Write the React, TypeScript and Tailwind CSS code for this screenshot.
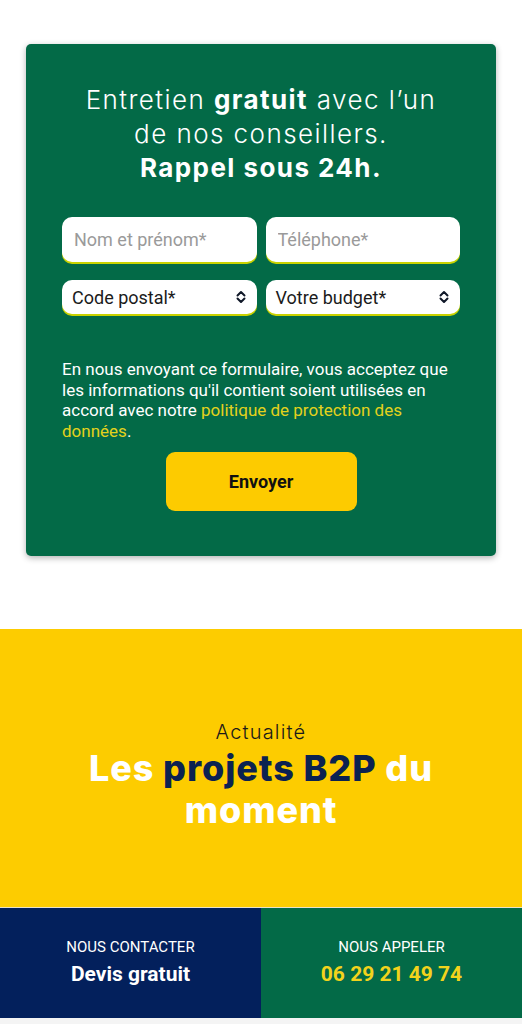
import React from 'react';

const Chevrons: React.FC = () => (
  <svg className="h-4 w-4 text-gray-900" viewBox="0 0 16 16" fill="none" stroke="currentColor" strokeWidth={2} strokeLinecap="round" strokeLinejoin="round">
    <path d="M4.5 6.5L8 3l3.5 3.5M4.5 9.5L8 13l3.5-3.5" />
  </svg>
);

const heading = { fontFamily: 'Inter, "Open Sans", sans-serif' };
const body = { fontFamily: 'Roboto, "Liberation Sans", sans-serif' };

export default function App() {
  return (
    <div className="flex min-h-screen flex-col bg-white" style={body}>
      <main className="px-[26px] pt-[44px] pb-[73px]">
        <section className="rounded-[5px] bg-[#036a47] px-9 pt-[39px] pb-[45px] shadow-[0_2px_6px_rgba(0,0,0,0.3)]">
          <h2 className="text-center text-[26px] font-light leading-[34px] tracking-[0.055em] text-white" style={heading}>
            Entretien <span className="font-bold">gratuit</span> avec l’un
            <br />
            de nos conseillers.
            <br />
            <span className="font-bold">Rappel sous 24h.</span>
          </h2>

          <form className="mt-[32px]" onSubmit={(e) => e.preventDefault()}>
            <div className="grid grid-cols-2 gap-[9px]">
              <input
                placeholder="Nom et prénom*"
                className="h-[45px] rounded-[10px] bg-white px-3 text-[18px] text-gray-900 shadow-[0_2px_0_#c9d200] outline-none placeholder:text-[#9a9a9a]"
              />
              <input
                placeholder="Téléphone*"
                className="h-[45px] rounded-[10px] bg-white px-3 text-[18px] text-gray-900 shadow-[0_2px_0_#c9d200] outline-none placeholder:text-[#9a9a9a]"
              />
            </div>
            <div className="mt-[18px] grid grid-cols-2 gap-[9px]">
              <div className="flex h-[34px] items-center justify-between rounded-[10px] bg-white pr-2 pl-[10px] text-[18px] text-[#1b1b1b] shadow-[0_2px_0_#c9d200]">
                <span>Code postal*</span>
                <Chevrons />
              </div>
              <div className="flex h-[34px] items-center justify-between rounded-[10px] bg-white pr-2 pl-[10px] text-[18px] text-[#1b1b1b] shadow-[0_2px_0_#c9d200]">
                <span>Votre budget*</span>
                <Chevrons />
              </div>
            </div>

            <p className="mt-[45px] text-[17px] leading-[20.5px] text-white">
              En nous envoyant ce formulaire, vous acceptez que les informations qu'il contient soient utilisées en
              accord avec notre <a className="text-[#e3d21c]">politique de protection des données</a>.
            </p>

            <div className="mt-[11px] flex justify-center">
              <button className="h-[59px] w-[191px] rounded-[9px] bg-[#fdcb00] text-[18px] font-bold text-[#111]">
                Envoyer
              </button>
            </div>
          </form>
        </section>
      </main>

      <section className="flex h-[278px] flex-col items-center bg-[#fdcc00] pt-[88px] text-center">
        <p className="text-[20px] font-light tracking-[0.06em] text-[#1a1a1a]" style={heading}>Actualité</p>
        <h2 className="mt-0 w-[400px] text-[36px] font-extrabold leading-[42px] tracking-[0.025em] text-white" style={heading}>
          Les <span className="text-[#0b2251]">projets B2P</span> du moment
        </h2>
      </section>

      <div className="h-px bg-[#e9e2c6]" />
      <nav className="grid h-[110px] grid-cols-2">
        <a className="flex flex-col items-center justify-center bg-[#03205c] text-white">
          <span className="text-[15px] uppercase">Nous contacter</span>
          <span className="mt-[1px] text-[21px] font-bold">Devis gratuit</span>
        </a>
        <a className="flex flex-col items-center justify-center bg-[#036a47] text-white">
          <span className="text-[15px] uppercase">Nous appeler</span>
          <span className="mt-[1px] text-[21px] font-bold text-[#f2d31c]">06 29 21 49 74</span>
        </a>
      </nav>
      <div className="h-[7px] bg-[#f4f4f4]" />
    </div>
  );
}
